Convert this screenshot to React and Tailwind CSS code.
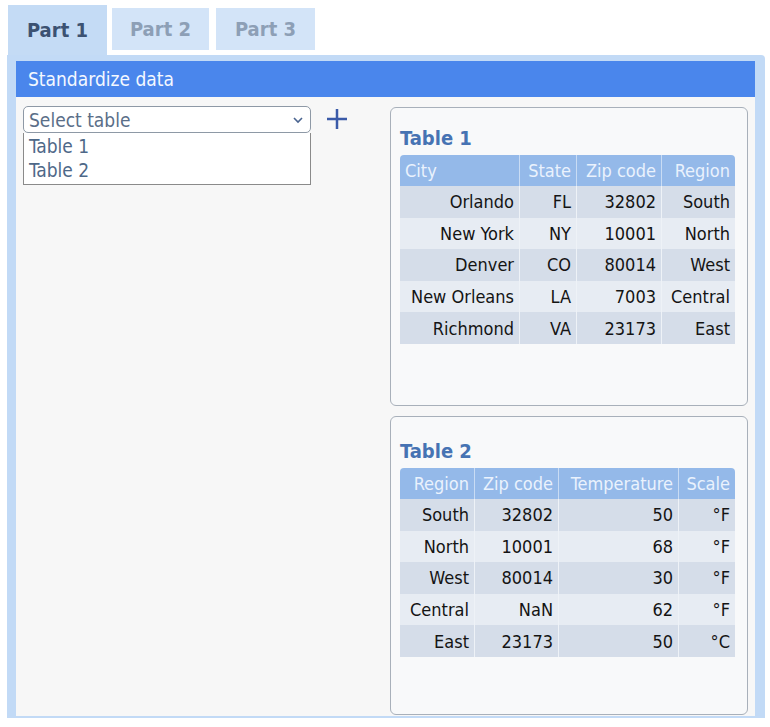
import React from "react";

const font = { fontFamily: '"DejaVu Sans Condensed", "DejaVu Sans", Verdana, sans-serif', fontStretch: "semi-condensed" };

function DataTable({ cols, rows }) {
  return (
    <div className="w-[335px] flex flex-col">
      <div className="flex h-[31px] bg-[#94b9e9] rounded-t-[4px] text-[#eaf2fd] text-[18px]">
        {cols.map((c, i) => (
          <div
            key={i}
            className={`flex items-center whitespace-nowrap px-[5px] ${i > 0 ? "border-l border-[#c9dcf4]" : ""} ${c.headLeft ? "justify-start" : "justify-end"}`}
            style={{ width: c.w }}
          >
            {c.label}
          </div>
        ))}
      </div>
      {rows.map((r, ri) => (
        <div
          key={ri}
          className={`flex h-[31.6px] text-[18px] text-[#141414] ${ri % 2 === 0 ? "bg-[#d5dde9]" : "bg-[#e7ecf3]"}`}
        >
          {r.map((v, ci) => (
            <div
              key={ci}
              className={`flex items-center justify-end whitespace-nowrap px-[5px] ${ci > 0 ? "border-l border-[#eef2f7]" : ""}`}
              style={{ width: cols[ci].w }}
            >
              {v}
            </div>
          ))}
        </div>
      ))}
    </div>
  );
}

function Card({ title, cols, rows, top }) {
  return (
    <div className={`w-[358px] h-[299px] rounded-[6px] border border-[#a8b0ba] bg-[#f8f9fa] pl-[9px] ${top}`}>
      <div className="text-[20px] font-bold text-[#4673b3] leading-[28px] mb-[3px]">{title}</div>
      <DataTable cols={cols} rows={rows} />
    </div>
  );
}

export default function App() {
  const t1cols = [
    { label: "City", w: 119, headLeft: true },
    { label: "State", w: 57 },
    { label: "Zip code", w: 85 },
    { label: "Region", w: 74 },
  ];
  const t1rows = [
    ["Orlando", "FL", "32802", "South"],
    ["New York", "NY", "10001", "North"],
    ["Denver", "CO", "80014", "West"],
    ["New Orleans", "LA", "7003", "Central"],
    ["Richmond", "VA", "23173", "East"],
  ];
  const t2cols = [
    { label: "Region", w: 74 },
    { label: "Zip code", w: 84 },
    { label: "Temperature", w: 120 },
    { label: "Scale", w: 57 },
  ];
  const t2rows = [
    ["South", "32802", "50", "°F"],
    ["North", "10001", "68", "°F"],
    ["West", "80014", "30", "°F"],
    ["Central", "NaN", "62", "°F"],
    ["East", "23173", "50", "°C"],
  ];

  return (
    <div className="w-[770px] h-[727px] bg-white pt-[5px] pl-[7px]" style={font}>
      <div className="flex items-start">
        <div className="ml-[1px] w-[99px] h-[50px] bg-[#c4dbf5] flex items-center justify-center text-[20px] font-bold text-[#3c5272]">
          Part 1
        </div>
        <div className="ml-[5px] mt-[3px] w-[97px] h-[42px] bg-[#d3e4f8] flex items-center justify-center text-[20px] font-bold text-[#8d9fb6]">
          Part 2
        </div>
        <div className="ml-[7px] mt-[3px] w-[99px] h-[42px] bg-[#d3e4f8] flex items-center justify-center text-[20px] font-bold text-[#8d9fb6]">
          Part 3
        </div>
      </div>
      <div className="w-[758px] h-[663px] bg-[#c2daf6] pl-[9px] pr-[10px] pt-[6px] pb-[2px] rounded-tr-[4px]">
        <div className="h-full bg-[#f7f7f7] flex flex-col">
          <div className="h-[36px] bg-[#4a86ec] text-[#f4f8ff] text-[19px] flex items-center pl-[12px] pt-[1px]">
            Standardize data
          </div>
          <div className="flex flex-1">
            <div className="pl-[7px] pt-[9px] w-[374px]">
              <div className="flex items-start">
                <div className="w-[288px]">
                  <div className="h-[27px] bg-white border border-[#8e99a6] rounded-[5px] flex items-center justify-between pl-[5px] pr-[6px] text-[19px] text-[#5a6e88] pt-[1px]">
                    <span>Select table</span>
                    <svg width="12" height="8" viewBox="0 0 12 8">
                      <path d="M2 2 L6 6 L10 2" fill="none" stroke="#4a6490" strokeWidth="1.6" />
                    </svg>
                  </div>
                  <div className="h-[52px] bg-white border border-[#8a8a8a] border-t-0 pl-[5px] text-[19px] text-[#4e6888] leading-[24px] pt-[1px]">
                    <div>Table 1</div>
                    <div>Table 2</div>
                  </div>
                </div>
                <svg className="ml-[14px] mt-[1px]" width="24" height="24" viewBox="0 0 24 24">
                  <path d="M12 2 V22 M2 12 H22" stroke="#3a5aa8" strokeWidth="2.5" />
                </svg>
              </div>
            </div>
            <div className="pt-[10px] flex flex-col gap-[10px]">
              <Card title="Table 1" cols={t1cols} rows={t1rows} top="pt-[16px]" />
              <Card title="Table 2" cols={t2cols} rows={t2rows} top="pt-[20px]" />
            </div>
          </div>
        </div>
      </div>
    </div>
  );
}
